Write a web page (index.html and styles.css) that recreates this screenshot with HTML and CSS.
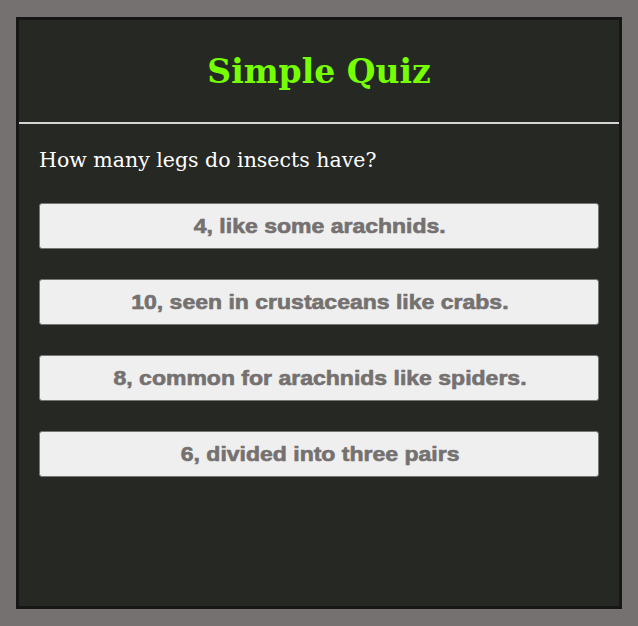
FILE: index.html
```html
<!DOCTYPE html>
<html lang="en">
<head>
<meta charset="utf-8">
<title>Simple Quiz</title>
<link rel="stylesheet" href="styles.css">
</head>
<body>
<div class="quiz">
  <header class="quiz-header">
    <h1 class="quiz-title">Simple Quiz</h1>
  </header>
  <main class="quiz-body">
    <p class="question">How many legs do insects have?</p>
    <div class="answers">
      <button class="answer"><span class="answer-text">4, like some arachnids.</span></button>
      <button class="answer"><span class="answer-text">10, seen in crustaceans like crabs.</span></button>
      <button class="answer"><span class="answer-text">8, common for arachnids like spiders.</span></button>
      <button class="answer"><span class="answer-text">6, divided into three pairs</span></button>
    </div>
  </main>
</div>
</body>
</html>
```
FILE: styles.css
```css
html, body {
  margin: 0;
  padding: 0;
}
body {
  background: #757170;
  padding: 17px 16px;
  font-family: "DejaVu Serif", serif;
}
.quiz {
  box-sizing: border-box;
  height: 592px;
  background: #262824;
  border: 3px solid #161616;
}
.quiz-header {
  height: 102px;
  border-bottom: 2px solid #d4d4d4;
  display: flex;
  align-items: center;
  justify-content: center;
}
.quiz-title {
  margin: 0;
  color: #76ff03;
  font-size: 33px;
  font-weight: bold;
}
.quiz-body {
  padding: 22px 20px 0;
}
.question {
  margin: 0;
  color: #ffffff;
  font-size: 20.5px;
  line-height: 28px;
}
.answers {
  margin-top: 29px;
  display: flex;
  flex-direction: column;
  gap: 30px;
}
.answer {
  height: 46px;
  background: #efefef;
  border: 1px solid #767676;
  border-radius: 3px;
  color: #757170;
  font-family: "Liberation Sans", Arial, sans-serif;
  font-weight: bold;
  font-size: 19.5px;
  text-align: center;
  padding: 0 0 0 2px;
}
.answer-text {
  display: inline-block;
  transform: scaleX(1.18);
  -webkit-text-stroke: 0.6px #757170;
}
```
